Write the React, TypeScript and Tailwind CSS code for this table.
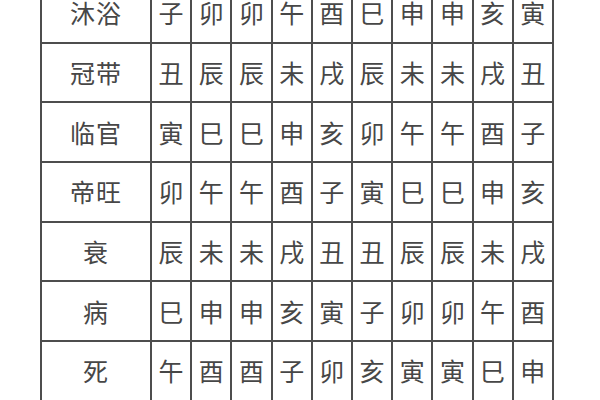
import React from "react";

const rows: [string, string[]][] = [
  ["沐浴", ["子", "卯", "卯", "午", "酉", "巳", "申", "申", "亥", "寅"]],
  ["冠带", ["丑", "辰", "辰", "未", "戌", "辰", "未", "未", "戌", "丑"]],
  ["临官", ["寅", "巳", "巳", "申", "亥", "卯", "午", "午", "酉", "子"]],
  ["帝旺", ["卯", "午", "午", "酉", "子", "寅", "巳", "巳", "申", "亥"]],
  ["衰", ["辰", "未", "未", "戌", "丑", "丑", "辰", "辰", "未", "戌"]],
  ["病", ["巳", "申", "申", "亥", "寅", "子", "卯", "卯", "午", "酉"]],
  ["死", ["午", "酉", "酉", "子", "卯", "亥", "寅", "寅", "巳", "申"]],
  ["墓", ["未", "戌", "戌", "丑", "辰", "戌", "丑", "丑", "辰", "未"]],
];

export default function App() {
  return (
    <div className="w-[600px] h-[400px] overflow-hidden bg-white">
      <div
        className="ml-[40px] -mt-[18px] w-[514px] grid grid-cols-[108px_repeat(10,38.2px)] auto-rows-[57.7px] gap-[2px] p-[2px] bg-[#4d4d4d] text-[#474747] text-[25px] leading-none"
        style={{ fontFamily: '"Noto Sans CJK SC", "Noto Sans", sans-serif' }}
      >
        {rows.map(([label, cells]) => (
          <React.Fragment key={label}>
            <div className="bg-white flex items-center justify-center tracking-[1px]">{label}</div>
            {cells.map((c, i) => (
              <div key={i} className="bg-white flex items-center justify-center">
                {c}
              </div>
            ))}
          </React.Fragment>
        ))}
      </div>
    </div>
  );
}
